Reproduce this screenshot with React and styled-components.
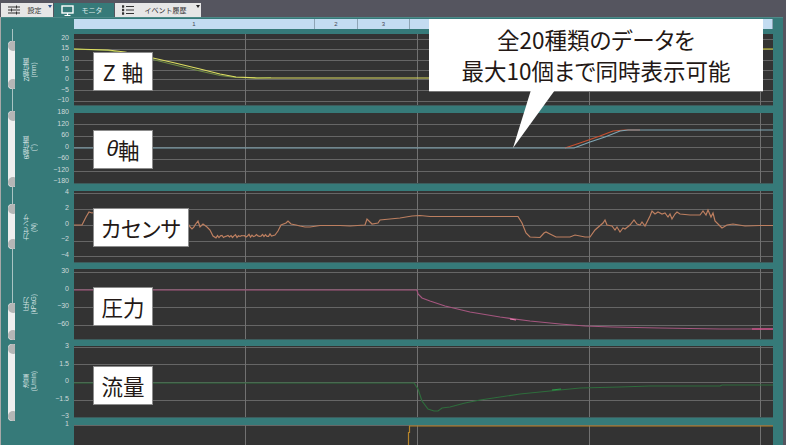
import React from "react";
import styled, { createGlobalStyle } from "styled-components";

const GlobalStyle = createGlobalStyle`
    html, body {
        margin: 0;
        padding: 0;
        background: #55555f;
    }
`;

const TEAL = "#367a79";

const Page = styled.div`
    position: relative;
    width: 786px;
    height: 445px;
    overflow: hidden;
    background: #55555f;
    font-family: "Liberation Sans", "Noto Sans CJK JP", sans-serif;
`;

const TabBar = styled.div`
    display: flex;
    height: 14px;
    padding: 3px 0 0 1px;
`;

const Tab = styled.div`
    position: relative;
    display: flex;
    align-items: center;
    box-sizing: border-box;
    width: ${(props) => props.$width}px;
    margin-right: 1px;
    padding-left: 7px;
    font-size: 7px;
    color: ${(props) => (props.$active ? "#dce8e8" : "#333")};
    background: ${(props) => (props.$active ? TEAL : "#e6e6e6")};
`;

const TabText = styled.span`
    flex: 1;
    text-align: center;
    white-space: nowrap;
    padding-right: ${(props) => props.$pad || 0}px;
`;

const Marker = styled.span`
    position: absolute;
    top: 2px;
    right: 1px;
    width: 0;
    height: 0;
    border-left: 2px solid transparent;
    border-right: 2px solid transparent;
    border-top: 3px solid ${(props) => props.$color};
`;

const Panel = styled.div`
    width: 782px;
    height: 428px;
    margin-left: 1px;
    padding-top: 1px;
    box-sizing: border-box;
    overflow: hidden;
    background: ${TEAL};
    border-top: 1px solid #4d8a88;
    box-shadow: -1px 0 0 #a8a8a8;
`;

const Ruler = styled.div`
    display: flex;
    width: 699px;
    height: 10px;
    margin-left: 73px;
    background: #c3dcf1;
`;

const RulerCell = styled.div`
    box-sizing: border-box;
    width: ${(props) => props.$width}px;
    flex: ${(props) => (props.$width ? "none" : "1")};
    border-right: 1px solid #8ea4b4;
    font-size: 6px;
    line-height: 10px;
    text-align: center;
    color: #445;
`;

const Charts = styled.div`
    padding-top: 5px;
    background: linear-gradient(#a9c4c3, #a9c4c3) 11px 0 / 1px 274px no-repeat;
`;

const Row = styled.div`
    display: grid;
    grid-template-columns: 73px 699px;
    grid-template-rows: ${(props) => props.$height}px;
    margin-bottom: ${(props) => props.$gap}px;
`;

const Side = styled.div`
    display: flex;
    align-items: stretch;
    min-height: 0;
    padding-left: 7px;
`;

const Grip = styled.div`
    display: flex;
    flex-direction: column;
    justify-content: space-between;
    flex: none;
    box-sizing: border-box;
    width: 7px;
    height: ${(props) => props.$height}px;
    margin-top: ${(props) => props.$top}px;
    background: ${(props) => (props.$height ? "#efefef" : "none")};
    border-radius: 4px 0 0 4px;
`;

const Knob = styled.div`
    height: 10px;
    background: #b4b6b6;
    border-radius: 5px 1px 1px 5px;
`;

const SideLabel = styled.div`
    flex: none;
    align-self: center;
    width: 14px;
    margin-left: 9px;
    writing-mode: vertical-rl;
    transform: rotate(180deg);
    font-size: 6.5px;
    line-height: 6.5px;
    text-align: center;
    white-space: pre;
    color: #d5e2e2;
`;

const Axis = styled.div`
    display: flex;
    flex-direction: column;
    justify-content: space-between;
    flex: 1;
    margin: ${(props) => props.$top}px 5px ${(props) => props.$bottom}px 0;
`;

const Tick = styled.div`
    height: 8px;
    font-size: 7px;
    line-height: 8px;
    text-align: right;
    white-space: nowrap;
    color: #ced9d9;
`;

const Plot = styled.div`
    position: relative;
    background: #333333;
    box-shadow: 0 1px 0 #3d5c5c;
`;

const PlotSvg = styled.svg`
    display: block;
`;

const NameBox = styled.div`
    position: absolute;
    left: ${(props) => props.$left}px;
    top: ${(props) => props.$top}px;
    display: flex;
    align-items: center;
    justify-content: center;
    box-sizing: border-box;
    width: ${(props) => props.$width}px;
    height: 39px;
    background: #fff;
    border: 1px solid #8c8c8c;
    font-family: "Noto Sans CJK JP", sans-serif;
    font-size: 21.5px;
    font-feature-settings: "palt";
    color: #231815;
`;

const Theta = styled.i`
    font-family: "Liberation Sans", sans-serif;
`;

const Gap = styled.span`
    display: inline-block;
    width: 6px;
`;

const Note = styled.div`
    position: absolute;
    left: 429px;
    top: 19px;
    box-sizing: border-box;
    width: 334px;
    height: 73px;
    padding-top: 5px;
    background: #fff;
    border-bottom: 1px solid #777;
    font-family: "Noto Sans CJK JP", sans-serif;
    font-size: 22.5px;
    line-height: 31px;
    text-align: center;
    font-feature-settings: "palt";
    color: #231815;
`;

const NoteLine = styled.div`
    white-space: nowrap;
`;

const NoteTail = styled.svg`
    position: absolute;
    left: 510px;
    top: 90px;
`;

const VLINES = [245, 417, 589, 760];

// small wobble, so the force trace looks like a real measured signal
const wiggle = (x0, x1, y0, y1, amp) => {
    const pts = [];
    for (let x = x0; x <= x1; x += 1.5) {
        const t = (x - x0) / (x1 - x0);
        const n = Math.sin(x * 1.9) * Math.sin(x * 0.47) + 0.4 * Math.sin(x * 3.3);
        pts.push([x, y0 + (y1 - y0) * t + amp * n]);
    }
    return pts;
};

const zAxis = [[74, 48], [108, 49], [125, 51], [153, 57], [175, 62], [200, 68], [220, 73], [236, 76], [257, 77], [430, 77]];
const zAxis2 = [[74, 48], [108, 49.5], [125, 52], [153, 58.5], [175, 64], [200, 70], [220, 74.5], [236, 76.5], [257, 77], [271, 76.5]];
const thetaBlue = [[74, 147], [574, 147], [590, 141], [605, 136], [620, 130], [628, 129], [773, 129]];
const thetaRed = [[565, 147], [580, 142], [600, 135], [613, 130], [625, 129], [640, 129]];

const force = [
    [74, 224], [82, 224], [86, 216], [89, 211], [92, 212], [96, 211], [189, 224], [190, 226], [192, 228], [194, 226],
    [195, 224], [198, 220], [200, 226], [203, 223], [207, 226], [210, 229], [213, 235],
    ...wiggle(216, 272, 235.5, 234.5, 1.5),
    [275, 234], [278, 230], [281, 224], [286, 222], [288, 220], [291, 223], [296, 224], [300, 225], [305, 226], [310, 226],
    [320, 224.5], [340, 224.5], [350, 225], [365, 224], [367, 218], [372, 223], [378, 222], [380, 219], [390, 218], [400, 217],
    [412, 215], [420, 214.5], [430, 215.5], [518, 215.5], [522, 222], [526, 232], [530, 236], [540, 236.5],
    [544, 232], [546, 231], [550, 233], [556, 236], [570, 236], [575, 234], [585, 236], [590, 236], [595, 229],
    [603, 222], [605, 219], [607, 224], [612, 225], [615, 229], [617, 226], [620, 231], [623, 227], [625, 228], [630, 224],
    [634, 219], [637, 223], [640, 224], [642, 221], [645, 225], [650, 215], [652, 210], [655, 213], [658, 211],
    [662, 213], [665, 212], [668, 216], [670, 213], [672, 218], [675, 213], [677, 211], [680, 213], [690, 214],
    [700, 214], [703, 210], [706, 214], [708, 209], [711, 216], [713, 212], [715, 220], [720, 225], [722, 227], [727, 224],
    [733, 223], [745, 225], [760, 224.5], [773, 224.5],
];

const pressure = [
    [74, 289], [417, 289], [418, 293], [422, 297], [430, 300], [445, 305], [470, 311], [500, 316], [530, 320],
    [560, 323], [585, 325], [612, 326], [660, 327], [720, 328], [773, 328],
];
const flow = [
    [74, 382], [414, 382], [418, 388], [422, 400], [428, 408], [434, 410], [438, 410], [442, 407], [450, 406],
    [465, 402], [480, 399], [500, 396], [520, 393], [540, 391], [560, 389], [580, 387], [620, 386], [650, 385],
    [720, 385], [722, 384], [773, 384],
];
const gate = [[408.5, 445], [408.5, 431.5], [409.5, 431.5], [409.5, 425], [773, 425]];

const charts = [
    {
        top: 33, height: 71, gap: 8, grip: [7, 48], label: "Z軸位置\n(mm)",
        ticks: [["20", 38], ["15", 48], ["10", 59], ["5", 69], ["0", 78], ["−5", 89], ["−10", 100]],
        name: <>Z<Gap />軸</>, nameTop: 18, nameWidth: 60,
        traces: [[zAxis2, "#6f8a45"], [zAxis, "#dede62"], [[[763, 48], [773, 48]], "#b9b83a"]],
    },
    {
        top: 112, height: 70, gap: 8, grip: [-2, 76], label: "θ軸位置\n(°)", noEdge: true,
        ticks: [["180", 112], ["120", 123], ["60", 135], ["0", 146], ["−60", 158], ["−120", 170], ["−180", 181]],
        name: <><Theta>θ</Theta>軸</>, nameTop: 17, nameWidth: 60,
        traces: [[thetaRed, "#c9502f"], [thetaBlue, "#7fa6b4"]],
    },
    {
        top: 190, height: 71, gap: 7, grip: [13, 45], label: "力センサ\n(N)",
        ticks: [["4", 192], ["2", 208], ["0", 224], ["−2", 240], ["−4", 255]],
        name: "カセンサ", nameTop: 17, nameWidth: 96,
        traces: [[force, "#bd7f60"]],
    },
    {
        top: 268, height: 70, gap: 7, grip: [34, 37], label: "圧力\n(kPaG)",
        ticks: [["30", 271], ["0", 288], ["−30", 306], ["−60", 324]],
        name: "圧力", nameTop: 18, nameWidth: 60,
        traces: [
            [pressure, "#a5567f"],
            [[[510, 318], [516, 319]], "#ef7cb0"],
            [[[752, 328], [773, 328]], "#d9558f"],
        ],
    },
    {
        top: 345, height: 71, gap: 8, grip: [-2, 77], label: "流量\n(L/min)",
        ticks: [["3", 346], ["1.5", 363], ["0", 381], ["−1.5", 399], ["−3", 416]],
        name: "流量", nameTop: 20, nameWidth: 60,
        traces: [[flow, "#2e6c3c"], [[[552, 389], [561, 388]], "#2b9a48"]],
    },
    {
        top: 424, height: 21, gap: 0, label: "",
        ticks: [["1", 424]],
        traces: [[gate, "#b5842a"]],
    },
];

const toPoints = (pts) => pts.map(([x, y]) => `${x},${y}`).join(" ");

const Chart = ({ chart }) => {
    const { top, height, ticks, traces } = chart;
    const first = ticks[0][1] - top - 5;
    const last = top + height - ticks[ticks.length - 1][1] - 3;
    const grid = chart.noEdge ? ticks.slice(1, -1) : ticks;
    const grip = chart.grip || [0, 0];

    return (
        <Row $height={height} $gap={chart.gap}>
            <Side>
                <Grip $top={grip[0]} $height={grip[1]}>
                    {chart.grip && <Knob />}
                    {chart.grip && <Knob />}
                </Grip>
                <SideLabel>{chart.label}</SideLabel>
                <Axis $top={first} $bottom={ticks.length > 1 ? last : 0}>
                    {ticks.map(([text]) => (
                        <Tick key={text}>{text}</Tick>
                    ))}
                </Axis>
            </Side>
            <Plot>
                <PlotSvg width="699" height={height} viewBox={`74 ${top} 699 ${height}`}>
                    {grid.map(([text, y]) => (
                        <line key={text} x1="74" x2="773" y1={y + 0.5} y2={y + 0.5} stroke="#666666" />
                    ))}
                    {VLINES.map((x) => (
                        <line key={x} x1={x + 0.5} x2={x + 0.5} y1={top} y2={top + height} stroke="#717171" />
                    ))}
                    {traces.map(([pts, color], i) => (
                        <polyline key={i} points={toPoints(pts)} fill="none" stroke={color} strokeWidth="1.2" />
                    ))}
                </PlotSvg>
                {chart.name && (
                    <NameBox $left={19} $top={chart.nameTop} $width={chart.nameWidth}>
                        {chart.name}
                    </NameBox>
                )}
            </Plot>
        </Row>
    );
};

const App = () => (
    <Page>
        <GlobalStyle />
        <TabBar>
            <Tab $width={52}>
                <svg width="12" height="10" viewBox="0 0 12 10" fill="none" stroke="#333">
                    <path d="M0 2h12M0 5h12M0 8h12" />
                    <path d="M8.5 0.5v3M3.5 3.5v3M8.5 6.5v3" />
                </svg>
                <TabText $pad={4}>設定</TabText>
                <Marker $color="#2b4f8a" />
            </Tab>
            <Tab $width={60} $active>
                <svg width="13" height="11" viewBox="0 0 13 11" fill="none" stroke="#fff">
                    <rect x="1" y="1" width="11" height="7" strokeWidth="1.4" />
                    <path d="M6.5 8v2M3.5 10.5h6" strokeWidth="1.2" />
                </svg>
                <TabText $pad={4}>モニタ</TabText>
            </Tab>
            <Tab $width={86}>
                <svg width="12" height="10" viewBox="0 0 12 10" fill="#333" stroke="#333">
                    <path d="M0 0.5h2v2h-2zM0 4h2v2h-2zM0 7.5h2v2h-2z" strokeWidth="0.4" />
                    <path d="M4 1.5h8M4 5h8M4 8.5h8" />
                </svg>
                <TabText $pad={4}>イベント履歴</TabText>
                <Marker $color="#222" />
            </Tab>
        </TabBar>
        <Panel>
            <Ruler>
                <RulerCell $width={241}>1</RulerCell>
                <RulerCell $width={43}>2</RulerCell>
                <RulerCell $width={52}>3</RulerCell>
                <RulerCell />
            </Ruler>
            <Charts>
                {charts.map((chart) => (
                    <Chart key={chart.top} chart={chart} />
                ))}
            </Charts>
        </Panel>
        <Note>
            <NoteLine>全20種類のデータを</NoteLine>
            <NoteLine>最大10個まで同時表示可能</NoteLine>
        </Note>
        <NoteTail width="50" height="60" viewBox="0 0 50 60">
            <polygon points="21,0 45,0 3,58" fill="#fff" />
        </NoteTail>
    </Page>
);

export default App;
